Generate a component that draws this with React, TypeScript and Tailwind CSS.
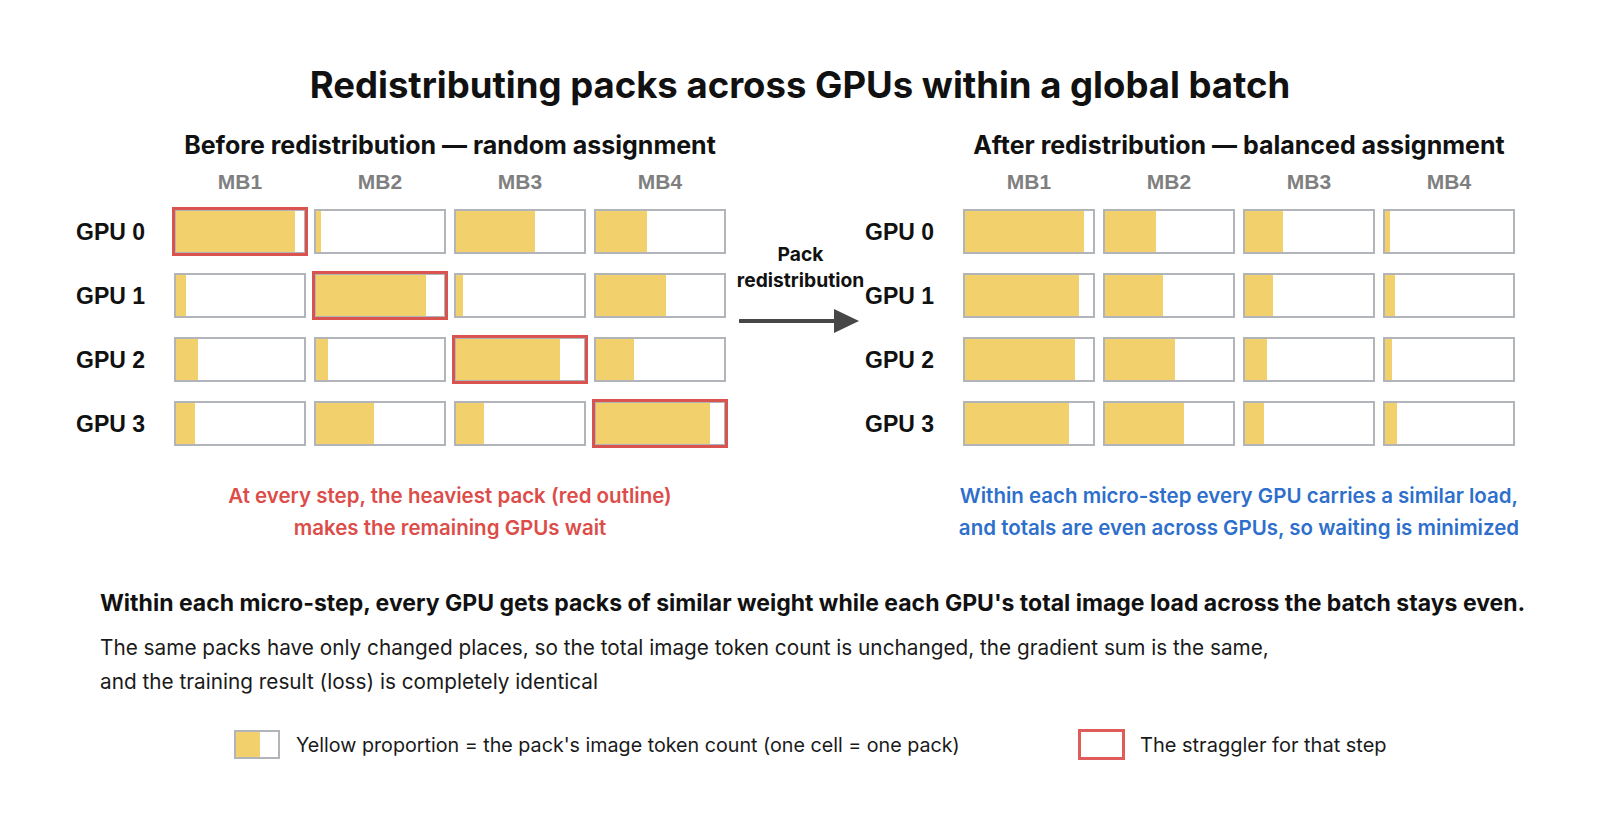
import React from "react";

const INTER = { fontFamily: '"Inter", "Noto Sans", sans-serif' };
const ARIAL = { fontFamily: '"Liberation Sans", Arial, sans-serif' };

type CellData = { v: number; red?: boolean };

const before: CellData[][] = [
  [{ v: 0.93, red: true }, { v: 0.04 }, { v: 0.62 }, { v: 0.4 }],
  [{ v: 0.08 }, { v: 0.86, red: true }, { v: 0.055 }, { v: 0.55 }],
  [{ v: 0.17 }, { v: 0.09 }, { v: 0.81, red: true }, { v: 0.3 }],
  [{ v: 0.145 }, { v: 0.45 }, { v: 0.22 }, { v: 0.89, red: true }],
];

const after: CellData[][] = [
  [{ v: 0.93 }, { v: 0.4 }, { v: 0.3 }, { v: 0.04 }],
  [{ v: 0.89 }, { v: 0.45 }, { v: 0.22 }, { v: 0.08 }],
  [{ v: 0.86 }, { v: 0.55 }, { v: 0.17 }, { v: 0.055 }],
  [{ v: 0.81 }, { v: 0.62 }, { v: 0.145 }, { v: 0.09 }],
];

function Cell({ v, red }: CellData) {
  return (
    <div className="relative h-[45px] w-[132px] border-2 border-[#b1b4b9] bg-white">
      <div className="h-full bg-[#f2d06b]" style={{ width: `${v * 100}%` }} />
      {red && <div className="absolute -inset-[4px] border-[3px] border-[#d9534f]" />}
    </div>
  );
}

function Panel({
  title,
  data,
  caption,
  captionClass,
}: {
  title: string;
  data: CellData[][];
  caption: React.ReactNode;
  captionClass: string;
}) {
  return (
    <div className="flex w-[652px] flex-col">
      <div
        className="ml-[48px] w-[652px] whitespace-nowrap text-center text-[25px] font-bold leading-[30px] text-[#111]"
        style={INTER}
      >
        {title}
      </div>
      <div className="ml-[98px] mt-[10px] flex gap-[8px]">
        {["MB1", "MB2", "MB3", "MB4"].map((m) => (
          <div
            key={m}
            className="w-[132px] text-center text-[21px] font-bold leading-[24px] text-[#7f7f7f]"
            style={ARIAL}
          >
            {m}
          </div>
        ))}
      </div>
      <div className="mt-[15px] flex flex-col gap-[19px]">
        {data.map((row, i) => (
          <div key={i} className="flex items-center">
            <div className="w-[98px] text-[23px] font-bold leading-[28px] text-[#111]" style={ARIAL}>
              GPU {i}
            </div>
            <div className="flex gap-[8px]">
              {row.map((c, j) => (
                <Cell key={j} {...c} />
              ))}
            </div>
          </div>
        ))}
      </div>
      <div
        className={`ml-[48px] mt-[34px] w-[652px] whitespace-nowrap text-center text-[20.5px] font-semibold leading-[32px] ${captionClass}`}
        style={INTER}
      >
        {caption}
      </div>
    </div>
  );
}

export default function App() {
  return (
    <div className="relative h-[840px] w-[1600px] overflow-hidden bg-white text-[#111]" style={INTER}>
      <div className="pt-[65px] text-center text-[36.5px] font-bold leading-[40px] text-[#111]">
        Redistributing packs across GPUs within a global batch
      </div>

      <div className="mt-[25px] flex pl-[76px]">
        <div className="w-[650px]">
          <Panel
            title="Before redistribution — random assignment"
            data={before}
            captionClass="text-[#dc4d4a]"
            caption={
              <>
                At every step, the heaviest pack (red outline)
                <br />
                makes the remaining GPUs wait
              </>
            }
          />
        </div>
        <div className="flex w-[139px] flex-col items-center pl-[10px] pt-[111px]">
          <div className="whitespace-nowrap text-center text-[19.25px] font-bold leading-[26px] text-[#111]">
            Pack
            <br />
            redistribution
          </div>
          <svg className="-ml-[4px] mt-[15px]" width="120" height="26" viewBox="0 0 120 26">
            <line x1="1" y1="13" x2="98" y2="13" stroke="#474747" strokeWidth="4" strokeLinecap="round" />
            <polygon points="95,1 120,13 95,25" fill="#474747" />
          </svg>
        </div>
        <div className="w-[651px]">
          <Panel
            title="After redistribution — balanced assignment"
            data={after}
            captionClass="text-[#2e6fcc]"
            caption={
              <>
                Within each micro-step every GPU carries a similar load,
                <br />
                and totals are even across GPUs, so waiting is minimized
              </>
            }
          />
        </div>
      </div>

      <div className="mt-[45px] whitespace-nowrap pl-[100px] text-[23px] font-bold leading-[28px] text-[#111]">
        Within each micro-step, every GPU gets packs of similar weight while each GPU's total image load across the
        batch stays even.
      </div>
      <div className="mt-[14px] whitespace-nowrap pl-[100px] text-[20.75px] font-normal leading-[34px] text-[#1a1a1a]">
        The same packs have only changed places, so the total image token count is unchanged, the gradient sum is the
        same,
        <br />
        and the training result (loss) is completely identical
      </div>

      <div className="mt-[30px] flex items-center pl-[234px]">
        <div className="flex w-[844px] items-center">
          <div className="flex h-[29px] w-[46px] border-2 border-[#b1b4b9] bg-white">
            <div className="h-full w-[58%] bg-[#f2d06b]" />
          </div>
          <div className="ml-[16px] whitespace-nowrap text-[19.7px] leading-[28px] text-[#1a1a1a]">
            Yellow proportion = the pack's image token count (one cell = one pack)
          </div>
        </div>
        <div className="flex items-center">
          <div className="h-[31px] w-[47px] border-[3px] border-[#e05c5a] bg-white" />
          <div className="ml-[15px] whitespace-nowrap text-[20px] leading-[28px] text-[#1a1a1a]">
            The straggler for that step
          </div>
        </div>
      </div>
    </div>
  );
}
